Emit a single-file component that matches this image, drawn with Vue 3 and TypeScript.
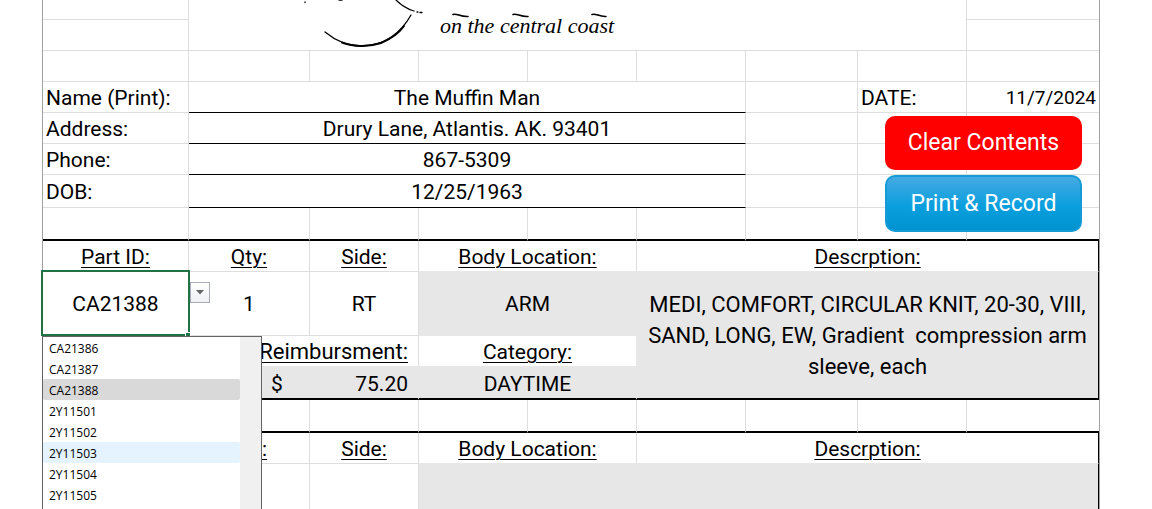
<script setup lang="ts">
import { ref } from 'vue'

interface Field {
  id: string
  label: string
  value: string
}

const fields = ref<Field[]>([
  { id: 'name', label: 'Name (Print):', value: 'The Muffin Man' },
  { id: 'address', label: 'Address:', value: 'Drury Lane, Atlantis. AK. 93401' },
  { id: 'phone', label: 'Phone:', value: '867-5309' },
  { id: 'dob', label: 'DOB:', value: '12/25/1963' },
])
const date = ref('11/7/2024')
const quantity = ref('1')

const parts = ['CA21386', 'CA21387', 'CA21388', '2Y11501', '2Y11502', '2Y11503', '2Y11504', '2Y11505']
const part = ref('CA21388')
const hovered = ref('2Y11503')
const open = ref(true)

function choose(value: string) {
  part.value = value
  open.value = false
}

function clearContents() {
  fields.value.forEach((field) => (field.value = ''))
  quantity.value = ''
}

function printRecord() {
  window.print()
}
</script>

<template>
  <main class="window">
    <div class="sheet">
      <table>
        <colgroup>
          <col class="c-part" />
          <col class="c-qty" />
          <col class="c-std" />
          <col class="c-std" />
          <col class="c-std" />
          <col class="c-std" />
          <col class="c-wide" />
          <col class="c-std" />
          <col class="c-last" />
        </colgroup>
        <tbody>
          <tr class="r-top">
            <td></td>
            <td colspan="7" rowspan="2" class="logo-cell">
              <svg class="logo" width="340" height="50" viewBox="0 0 340 50" role="img" aria-label="on the central coast">
                <g fill="none" stroke="#000" stroke-linecap="round">
                  <path d="M25 32C36 41 48 46 61 46C84 46 101 33 111 15" stroke-width="1.3" />
                  <path d="M42 42.500C54 47 69 47 81 43C91 39 99 33 104 26" stroke-width="2" />
                  <path d="M96 0C101 5 107 9 114 11" stroke-width="1.300" />
                  <path d="M117 12H118M120 12.500H122M5 2V2.500M39 0H42" stroke-width="1.300" />
                  <path d="M153 14.500C157 13 160 17 168 16.500M213 14.500C217 13 220 17 228 16.500M292 14.500C296 13 299 17 306 16.500" stroke-width="1.600" />
                </g>
                <text x="140" y="33">on the central coast</text>
              </svg>
            </td>
            <td></td>
          </tr>
          <tr>
            <td></td>
            <td></td>
          </tr>
          <tr>
            <td v-for="n in 9" :key="n"></td>
          </tr>
          <tr v-for="(field, i) in fields" :key="field.id" class="form-row" :class="{ tall: i === 3 }">
            <td class="label"><label :for="field.id">{{ field.label }}</label></td>
            <td colspan="5" class="entry"><input :id="field.id" v-model="field.value" type="text" /></td>
            <td></td>
            <td class="label"><label v-if="i === 0" for="date">DATE:</label></td>
            <td class="date"><input v-if="i === 0" id="date" v-model="date" type="text" /></td>
          </tr>
          <tr class="tall spacer">
            <td v-for="n in 9" :key="n"></td>
          </tr>

          <tr class="head">
            <th>Part ID:</th>
            <th><label for="qty">Qty:</label></th>
            <th>Side:</th>
            <th colspan="2" class="over-fill">Body Location:</th>
            <th colspan="4" class="over-fill edge">Descrption:</th>
          </tr>
          <tr class="item">
            <td class="picker">
              <select v-model="part" aria-label="Part ID">
                <option v-for="p in parts" :key="p">{{ p }}</option>
              </select>
              <span class="selection"></span>
              <span class="handle"></span>
              <button class="arrow" type="button" aria-label="Show part list" @click="open = !open">
                <svg width="8" height="5" viewBox="0 0 8 5"><path d="M0 0H8L4 4.500Z" fill="#666" /></svg>
              </button>
              <div v-if="open" class="dropdown">
                <ul role="listbox" aria-label="Parts">
                  <li
                    v-for="p in parts"
                    :key="p"
                    role="option"
                    :aria-selected="p === part"
                    :class="{ selected: p === part, hover: p === hovered }"
                    @mouseenter="hovered = p"
                    @click="choose(p)"
                  >
                    {{ p }}
                  </li>
                </ul>
                <div class="track"></div>
              </div>
            </td>
            <td><input id="qty" v-model="quantity" type="text" /></td>
            <td>RT</td>
            <td colspan="2" class="fill">ARM</td>
            <td colspan="4" rowspan="3" class="fill edge thick description">
              MEDI, COMFORT, CIRCULAR KNIT, 20-30, VIII, SAND, LONG, EW, Gradient&nbsp; compression arm sleeve, each
            </td>
          </tr>
          <tr class="head">
            <td></td>
            <th colspan="2" class="over-fill right">Reimbursment:</th>
            <th colspan="2" class="over-fill category">Category:</th>
          </tr>
          <tr class="tall totals">
            <td class="fill thick"></td>
            <td colspan="2" class="fill thick">
              <div class="money"><span>$</span><span>75.20</span></div>
            </td>
            <td colspan="2" class="fill thick">DAYTIME</td>
          </tr>
          <tr class="tall spacer">
            <td v-for="n in 9" :key="n"></td>
          </tr>

          <tr class="head">
            <th></th>
            <th>Qty:</th>
            <th>Side:</th>
            <th colspan="2" class="over-fill">Body Location:</th>
            <th colspan="4" class="over-fill edge">Descrption:</th>
          </tr>
          <tr class="item">
            <td></td>
            <td></td>
            <td></td>
            <td colspan="2" class="fill"></td>
            <td colspan="4" class="fill edge"></td>
          </tr>
        </tbody>
      </table>
      <div class="actions">
        <button type="button" class="clear" @click="clearContents">Clear Contents</button>
        <button type="button" class="print" @click="printRecord">Print &amp; Record</button>
      </div>
    </div>
  </main>
</template>

<style>
body {
  margin: 0;
  background: #fff;
}
</style>

<style scoped>
.window {
  height: 100vh;
  overflow: hidden;
  font-family: Roboto, "Liberation Sans", sans-serif;
  font-size: 21px;
  line-height: 28px;
  color: #000;
}
.sheet {
  position: relative;
  margin: 0 52px 0 42px;
  border-left: 1px solid #a0a0a0;
  border-right: 1px solid #a0a0a0;
}
table {
  width: 100%;
  table-layout: fixed;
  border-collapse: separate;
  border-spacing: 0;
}
.c-part { width: 146px; }
.c-qty { width: 121px; }
.c-std { width: 109px; }
.c-wide { width: 112px; }
.c-last { width: 132px; }
tr { height: 31px; }
.r-top { height: 20px; }
.tall { height: 33px; }
.item { height: 64px; }
td,
th {
  box-sizing: border-box;
  padding: 0;
  border-right: 1px solid #dedede;
  border-bottom: 1px solid #dedede;
  font-weight: 400;
  text-align: center;
  vertical-align: middle;
}
.form-row td,
.head th,
.totals td.fill { padding-top: 2px; }
td:last-child { border-right: 0; }
.item td { border-right: 1px solid #dedede; }
th { text-decoration: underline; text-decoration-thickness: 1px; text-underline-offset: 3px; }
.label { text-align: left; padding-left: 3px; }
.entry { border-bottom-color: #000; }
.spacer td { border-bottom: 2px solid #000; }
.head .over-fill { border-bottom-color: #e7e7e7; }
td.fill,
.item td.fill { background: #e7e7e7; border-right: 1px solid #e7e7e7; border-bottom-color: #e7e7e7; }
.totals td.thick,
.item td.thick { border-bottom: 2px solid #000; }
.head .edge,
.item td.edge { border-right: 1px solid #000; }
.head .right { text-align: right; padding-right: 10px; font-size: 22px; }
.head .category { border-right-color: #e7e7e7; }
.description { padding: 0 8px; font-size: 22px; line-height: 31px; }
.money { display: flex; justify-content: space-between; padding: 0 10px 0 82px; }
input,
select {
  display: block;
  box-sizing: border-box;
  width: 100%;
  height: 28px;
  padding: 0;
  border: 0;
  outline: 0;
  background: transparent;
  color: inherit;
  font: inherit;
  text-align: center;
}
select { appearance: none; text-align-last: center; }
.date input { text-align: right; padding-right: 3px; font-size: 19px; }
.logo-cell { vertical-align: top; }
.logo { display: block; margin-left: 111px; }
.logo text {
  font: italic 22px "Liberation Serif", serif;
}
.picker { position: relative; }
.selection {
  position: absolute;
  inset: -2px -2px -1px -2px;
  border: 2px solid #217346;
  pointer-events: none;
}
.handle {
  position: absolute;
  right: -3px;
  bottom: -1px;
  width: 4px;
  height: 3px;
  border: 1px solid #fff;
  border-bottom: 0;
  background: #217346;
}
.arrow {
  position: absolute;
  left: 147px;
  top: 10px;
  display: flex;
  align-items: center;
  justify-content: center;
  width: 20px;
  height: 21px;
  padding: 0;
  border: 1px solid #a9adb5;
  background: linear-gradient(#fff, #eef0f4);
}
.dropdown {
  position: absolute;
  z-index: 2;
  left: -1px;
  top: 64px;
  display: flex;
  width: 218px;
  min-height: 180px;
  border: 1px solid #646464;
  background: #fff;
  font: 12px/19px "Open Sans", "Noto Sans", sans-serif;
}
.dropdown ul {
  flex: 1;
  margin: 0;
  padding: 0;
  border-right: 1px solid #f0f0f0;
  list-style: none;
  text-align: left;
}
.dropdown li { padding: 2px 0 0 6px; border-radius: 2px; }
.dropdown li.hover { background: #e5f3ff; }
.dropdown li.selected { background: #d9d9d9; }
.track { width: 20px; background: #f0f0f0; }
.actions {
  position: absolute;
  top: 116px;
  right: 17px;
  display: flex;
  flex-direction: column;
  gap: 5px;
  width: 197px;
}
.actions button {
  height: 54px;
  padding: 0;
  border: 0;
  border-radius: 10px;
  color: #fff;
  font: inherit;
  font-size: 23px;
}
.actions .clear { background: #f00; }
.actions .print {
  height: 57px;
  border: 2px solid #159bd5;
  background: linear-gradient(#46aae1, #0a9fde 55%, #0093d0);
}
</style>
